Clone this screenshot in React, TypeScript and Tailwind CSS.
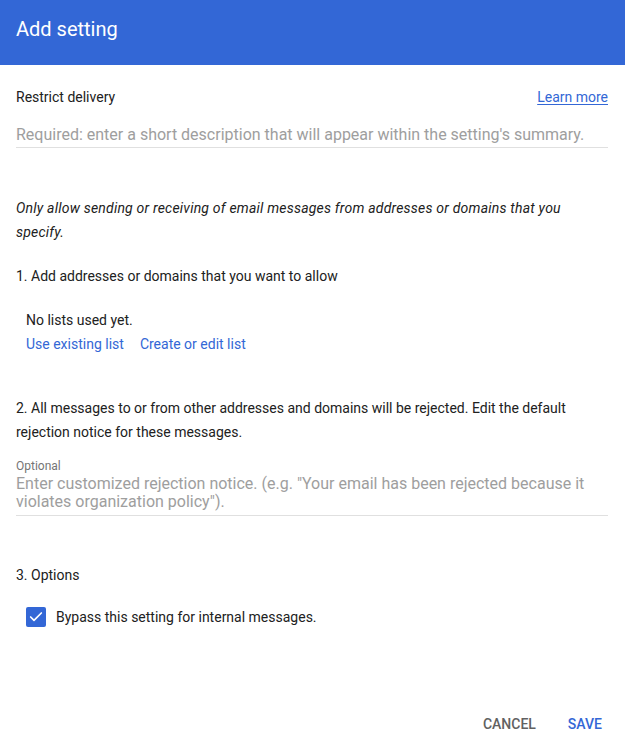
import { Check } from 'lucide-react'

export default function App() {
  return (
    <div className="flex h-screen flex-col bg-white font-['Roboto',sans-serif] text-[#212121]">
      {/* Header */}
      <div className="flex h-[65px] items-center bg-[#3367d6] px-4 pb-[7px]">
        <h1 className="text-[20px] leading-6 text-white">Add setting</h1>
      </div>

      <div className="flex flex-col pl-4 pr-[17px] pt-[22px]">
        {/* Title row */}
        <div className="flex items-center justify-between text-[14px] leading-5">
          <span>Restrict delivery</span>
          <a className="text-[#3367d6] underline underline-offset-2">Learn more</a>
        </div>
        <div className="mt-4 border-b border-[#e0e0e0] text-[16px] leading-6 text-[#9e9e9e]">
          Required: enter a short description that will appear within the setting's summary.
        </div>

        <p className="mt-12 pr-10 text-[14px] leading-6 tracking-[0.015em] italic">
          Only allow sending or receiving of email messages from addresses or domains that you specify.
        </p>

        {/* Step 1 */}
        <p className="mt-5 text-[14px] leading-6">1. Add addresses or domains that you want to allow</p>
        <div className="mt-5 pl-[10px] text-[14px] leading-6">
          <p>No lists used yet.</p>
          <div className="flex gap-4 text-[#3367d6]">
            <a>Use existing list</a>
            <a>Create or edit list</a>
          </div>
        </div>

        {/* Step 2 */}
        <p className="mt-10 text-[14px] leading-6">
          2. All messages to or from other addresses and domains will be rejected. Edit the default rejection notice
          for these messages.
        </p>
        <div className="mt-[14px] border-b border-[#e0e0e0] pb-1">
          <p className="text-[12px] leading-4 text-[#757575]">Optional</p>
          <p className="mt-[1px] text-[16px] leading-[18px] text-[#9e9e9e]">
            Enter customized rejection notice. (e.g. "Your email has been rejected because it violates organization
            policy").
          </p>
        </div>

        {/* Step 3 */}
        <p className="mt-[47px] text-[14px] leading-6">3. Options</p>
        <label className="mt-[18px] flex items-center gap-[10px] pl-[10px] text-[14px] leading-6">
          <span className="flex h-5 w-5 items-center justify-center rounded-[2px] bg-[#3367d6]">
            <Check className="h-4 w-4 text-white" strokeWidth={2.5} />
          </span>
          Bypass this setting for internal messages.
        </label>
      </div>

      {/* Footer */}
      <div className="mt-auto flex justify-end pb-[3px] pr-[7px] text-[14px] font-medium leading-5">
        <button className="px-4 py-0 text-[#616161]">CANCEL</button>
        <button className="px-4 py-0 text-[#3367d6]">SAVE</button>
      </div>
    </div>
  )
}
